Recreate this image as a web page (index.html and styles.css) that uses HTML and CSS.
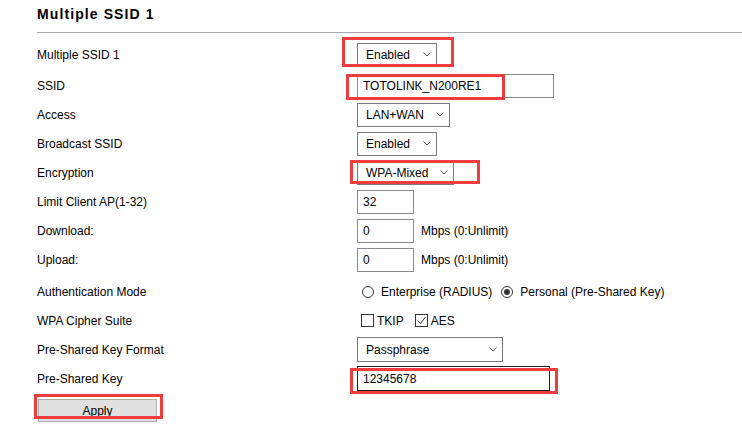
FILE: index.html
```html
<!DOCTYPE html>
<html>
<head>
<meta charset="utf-8">
<title>Multiple SSID 1</title>
<link rel="stylesheet" href="styles.css">
</head>
<body>
<div class="page">
  <h2 class="title">Multiple SSID 1</h2>
  <div class="form">
    <div class="row">
      <div class="label">Multiple SSID 1</div>
      <div class="ctl">
        <span class="anno">
          <span class="select w-enabled">Enabled<svg class="chev" width="8" height="5" viewBox="0 0 8 5"><path d="M0.5 0.5 L4 4 L7.5 0.5" fill="none" stroke="#555" stroke-width="1"/></svg></span>
          <span class="mark m1"></span>
        </span>
      </div>
    </div>
    <div class="row sp2">
      <div class="label">SSID</div>
      <div class="ctl">
        <span class="anno">
          <input class="field w-ssid" type="text" value="TOTOLINK_N200RE1">
          <span class="mark m2"></span>
        </span>
      </div>
    </div>
    <div class="row">
      <div class="label">Access</div>
      <div class="ctl">
        <span class="select w-access">LAN+WAN<svg class="chev" width="8" height="5" viewBox="0 0 8 5"><path d="M0.5 0.5 L4 4 L7.5 0.5" fill="none" stroke="#555" stroke-width="1"/></svg></span>
      </div>
    </div>
    <div class="row">
      <div class="label">Broadcast SSID</div>
      <div class="ctl">
        <span class="select w-enabled">Enabled<svg class="chev" width="8" height="5" viewBox="0 0 8 5"><path d="M0.5 0.5 L4 4 L7.5 0.5" fill="none" stroke="#555" stroke-width="1"/></svg></span>
      </div>
    </div>
    <div class="row">
      <div class="label">Encryption</div>
      <div class="ctl">
        <span class="anno">
          <span class="select w-enc">WPA-Mixed<svg class="chev" width="8" height="5" viewBox="0 0 8 5"><path d="M0.5 0.5 L4 4 L7.5 0.5" fill="none" stroke="#555" stroke-width="1"/></svg></span>
          <span class="mark m3"></span>
        </span>
      </div>
    </div>
    <div class="row">
      <div class="label">Limit Client AP(1-32)</div>
      <div class="ctl">
        <input class="field w-num" type="text" value="32">
      </div>
    </div>
    <div class="row">
      <div class="label">Download:</div>
      <div class="ctl">
        <input class="field w-num" type="text" value="0">
        <span class="unit">Mbps (0:Unlimit)</span>
      </div>
    </div>
    <div class="row">
      <div class="label">Upload:</div>
      <div class="ctl">
        <input class="field w-num" type="text" value="0">
        <span class="unit">Mbps (0:Unlimit)</span>
      </div>
    </div>
    <div class="row sp3">
      <div class="label">Authentication Mode</div>
      <div class="ctl">
        <div class="radios">
          <span class="opt"><span class="radio"></span>Enterprise (RADIUS)</span>
          <span class="opt"><span class="radio on"></span>Personal (Pre-Shared Key)</span>
        </div>
      </div>
    </div>
    <div class="row">
      <div class="label">WPA Cipher Suite</div>
      <div class="ctl">
        <div class="checks">
          <span class="copt"><span class="cb"></span>TKIP</span>
          <span class="copt"><span class="cb"><svg width="11" height="11" viewBox="0 0 11 11"><path d="M1.5 5.5 L4.5 8.5 L9.5 2" fill="none" stroke="#333" stroke-width="1"/></svg></span>AES</span>
        </div>
      </div>
    </div>
    <div class="row">
      <div class="label">Pre-Shared Key Format</div>
      <div class="ctl">
        <span class="select w-fmt tall">Passphrase<svg class="chev" width="8" height="5" viewBox="0 0 8 5"><path d="M0.5 0.5 L4 4 L7.5 0.5" fill="none" stroke="#555" stroke-width="1"/></svg></span>
      </div>
    </div>
    <div class="row">
      <div class="label">Pre-Shared Key</div>
      <div class="ctl">
        <span class="anno">
          <input class="field w-psk dark" type="text" value="12345678">
          <span class="mark m4"></span>
        </span>
      </div>
    </div>
    <div class="actions">
      <span class="anno">
        <button class="btn" type="button">Apply</button>
        <span class="mark m5"></span>
      </span>
    </div>
  </div>
</div>
</body>
</html>
```

FILE: styles.css
```css
* { box-sizing: border-box; }
html, body { margin: 0; background: #fff; }
body {
  font-family: "Liberation Sans", Arial, sans-serif;
  font-size: 12px;
  color: #000;
}
.page { padding-left: 37px; }
.title {
  margin: 0;
  padding: 6px 0 10px;
  font-size: 14px;
  line-height: 16px;
  font-weight: bold;
  letter-spacing: 1.1px;
  color: #000;
  border-bottom: 1px solid #aaaaaa;
}
.form { padding-top: 7px; }
.row {
  display: grid;
  grid-template-columns: 320px auto;
  height: 29px;
  align-items: center;
}
.row.sp2 { margin-top: 2px; }
.row.sp3 { margin-top: 3px; }
.label { white-space: nowrap; }
.ctl { display: flex; align-items: center; gap: 7px; }
.anno { position: relative; display: inline-flex; }
.mark {
  position: absolute;
  border: 3px solid #f03c3c;
  pointer-events: none;
}
.m1 { left: -15px; top: -6px; width: 112px; height: 30px; }
.m2 { left: -11px; top: 0; width: 159px; height: 26px; }
.m3 { left: -7px; top: -1px; width: 130px; height: 24px; }
.m4 { left: -7px; top: 2px; width: 208px; height: 26px; }
.m5 { left: -4px; top: -5px; width: 129px; height: 25px; }

.select {
  display: inline-flex;
  align-items: center;
  justify-content: space-between;
  height: 24px;
  border: 1px solid #7a7a7a;
  padding: 0 5px 0 8px;
  background: #fff;
  white-space: nowrap;
}
.select.tall { height: 25px; }
.chev { display: block; flex: none; }
.w-enabled { width: 80px; }
.w-access { width: 93px; }
.w-enc { width: 97px; }
.w-fmt { width: 146px; }

.field {
  display: block;
  height: 24px;
  border: 1px solid #8a8a8a;
  padding: 0 5px;
  margin: 0;
  font-family: inherit;
  font-size: 12px;
  color: #000;
  background: #fff;
  outline: none;
  border-radius: 0;
}
.field.dark { border-color: #1e1e1e; height: 25px; }
.w-ssid { width: 197px; }
.w-num { width: 57px; }
.w-psk { width: 193px; }

.radios { display: flex; align-items: center; padding-left: 5px; }
.opt { display: inline-flex; align-items: center; gap: 7px; margin-right: 9px; }
.radio {
  width: 12px;
  height: 12px;
  border: 1px solid #333;
  border-radius: 50%;
  display: inline-flex;
  align-items: center;
  justify-content: center;
}
.radio.on::after {
  content: "";
  width: 6px;
  height: 6px;
  border-radius: 50%;
  background: #333;
}
.checks { display: flex; align-items: center; padding-left: 4px; }
.copt { display: inline-flex; align-items: center; gap: 3px; margin-right: 11px; }
.cb {
  width: 13px;
  height: 13px;
  border: 1px solid #333;
  display: inline-flex;
  align-items: center;
  justify-content: center;
}
.cb svg { display: block; }

.actions { margin-top: 6px; padding-left: 1px; }
.btn {
  display: block;
  width: 119px;
  height: 23px;
  margin: 0;
  padding: 0;
  border: 1px solid #adadad;
  background: #e1e1e1;
  font-family: inherit;
  font-size: 12px;
  color: #000;
  border-radius: 0;
}
```
